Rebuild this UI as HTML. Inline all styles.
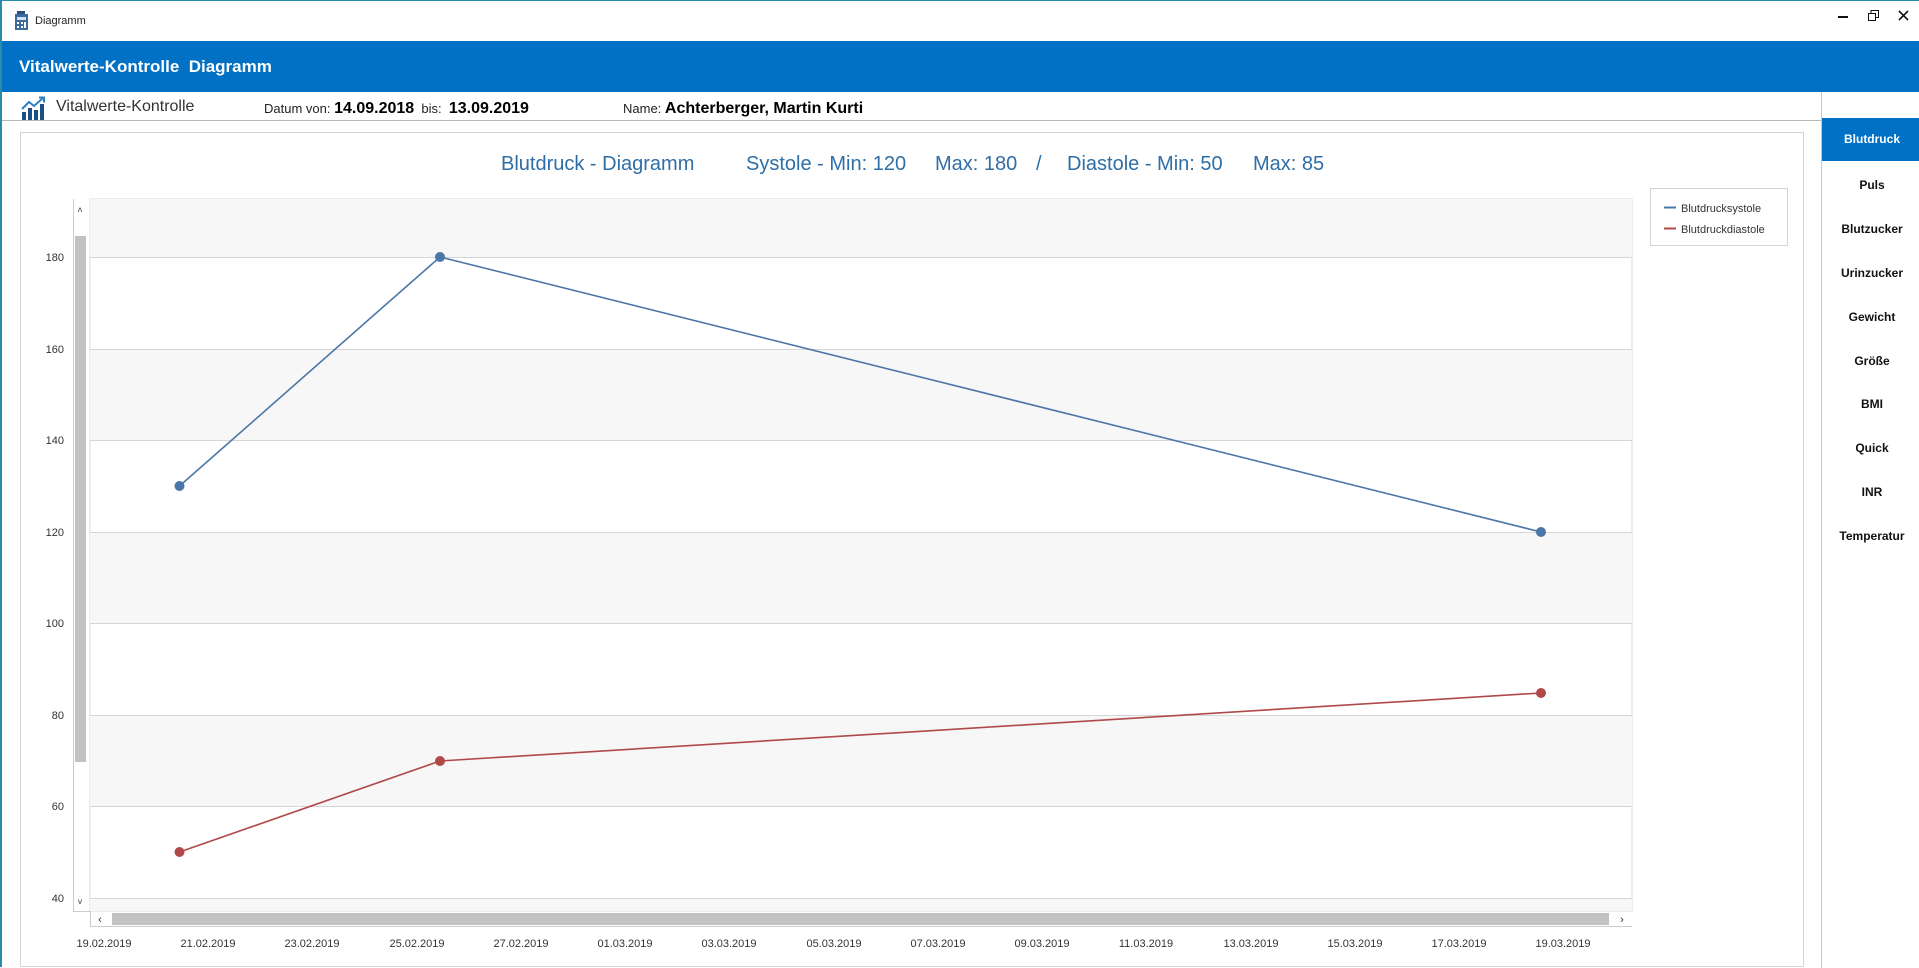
<!DOCTYPE html>
<html><head><meta charset="utf-8"><style>
*{margin:0;padding:0;box-sizing:border-box}
body{width:1919px;height:967px;overflow:hidden;background:#fff;font-family:"Liberation Sans",sans-serif;position:relative;border-left:2px solid #2a8aa8;border-top:1px solid #2a8aa8}
.a{position:absolute;white-space:nowrap}
.side{position:absolute;left:1819px;top:91px;width:100px;height:876px;border-left:1px solid #c8c8c8}
.si{position:absolute;left:0;width:100px;text-align:center;font-size:12px;font-weight:bold;color:#111}
</style></head><body>
<!-- title bar -->
<svg class="a" style="left:12px;top:10px" width="16" height="20" viewBox="0 0 16 20"><rect x="3" y="0" width="8" height="3" fill="#2c4f7c"/><rect x="1" y="3" width="13" height="16" fill="#3d6a9c"/><rect x="3" y="6" width="9" height="3" fill="#cfe2f5"/><rect x="3" y="11" width="2" height="2" fill="#fff"/><rect x="7" y="11" width="2" height="2" fill="#fff"/><rect x="3" y="15" width="2" height="2" fill="#fff"/><rect x="7" y="15" width="2" height="2" fill="#fff"/><rect x="10" y="11" width="2" height="6" fill="#fff"/></svg>
<div class="a" style="left:33px;top:14px;font-size:11px;color:#222">Diagramm</div>
<div class="a" style="left:1836px;top:15px;width:10px;height:2px;background:#111"></div>
<svg class="a" style="left:1866px;top:9px" width="12" height="11"><rect x="0.5" y="3.5" width="7" height="7" fill="none" stroke="#111"/><path d="M3 3.5V0.5H10.5V7.5H8" fill="none" stroke="#111"/></svg>
<svg class="a" style="left:1896px;top:9px" width="11" height="11"><path d="M1 1L10 10M10 1L1 10" stroke="#111" stroke-width="1.6"/></svg>
<!-- blue bar -->
<div class="a" style="left:0;top:40px;width:1919px;height:51px;background:#0071c5"></div>
<div class="a" style="left:17px;top:56px;font-size:17px;font-weight:bold;color:#fff">Vitalwerte-Kontrolle&nbsp; Diagramm</div>
<!-- header -->
<svg class="a" style="left:19px;top:95px" width="26" height="25" viewBox="0 0 26 25"><rect x="1" y="16" width="4" height="8" fill="#1c4f86"/><rect x="7" y="12" width="4" height="12" fill="#1c4f86"/><rect x="13" y="14" width="4" height="10" fill="#1c4f86"/><rect x="19" y="8" width="4" height="16" fill="#1c4f86"/><path d="M1 13L8 6L13 10L22 2" fill="none" stroke="#2f7fbf" stroke-width="2"/><path d="M18 1.5H23V6.5" fill="none" stroke="#2f7fbf" stroke-width="2"/></svg>
<div class="a" style="left:54px;top:97px;font-size:16px;color:#333">Vitalwerte-Kontrolle</div>
<div class="a" style="left:262px;top:99px;font-size:13px;color:#222">Datum von: <b style="font-size:16px;color:#000">14.09.2018</b>&nbsp; bis: &nbsp;<b style="font-size:16px;color:#000">13.09.2019</b></div>
<div class="a" style="left:621px;top:99px;font-size:13px;color:#222">Name: <b style="font-size:16px;color:#000">Achterberger, Martin Kurti</b></div>
<div class="a" style="left:0;top:119px;width:1819px;height:1px;background:#b8b8b8"></div>
<!-- sidebar -->
<div class="side">
<div class="a" style="left:0;top:26px;width:100px;height:43px;background:#0071c5"></div>
<div class="si" style="top:40px;color:#fff">Blutdruck</div>
<div class="si" style="top:86px">Puls</div>
<div class="si" style="top:130px">Blutzucker</div>
<div class="si" style="top:174px">Urinzucker</div>
<div class="si" style="top:218px">Gewicht</div>
<div class="si" style="top:262px">Größe</div>
<div class="si" style="top:305px">BMI</div>
<div class="si" style="top:349px">Quick</div>
<div class="si" style="top:393px">INR</div>
<div class="si" style="top:437px">Temperatur</div>
</div>
<!-- chart panel -->
<div class="a" style="left:18px;top:131px;width:1784px;height:835px;border:1px solid #d4d4d4"></div>
<div class="a" style="left:499px;top:152px;font-size:20px;color:#2f6ea6">Blutdruck - Diagramm</div>
<div class="a" style="left:744px;top:152px;font-size:20px;color:#2f6ea6">Systole - Min: 120</div>
<div class="a" style="left:933px;top:152px;font-size:20px;color:#2f6ea6">Max: 180</div>
<div class="a" style="left:1034px;top:152px;font-size:20px;color:#2f6ea6">/</div>
<div class="a" style="left:1065px;top:152px;font-size:20px;color:#2f6ea6">Diastole - Min: 50</div>
<div class="a" style="left:1251px;top:152px;font-size:20px;color:#2f6ea6">Max: 85</div>
<svg class="a" style="left:0;top:0" width="1919" height="967" font-family="Liberation Sans, sans-serif">
<rect x="88" y="198" width="1542" height="712" fill="#fff" stroke="#d8d8d8"/>
<rect x="88" y="198" width="1542" height="58" fill="#f7f7f7"/>
<rect x="88" y="348" width="1542" height="91" fill="#f7f7f7"/>
<rect x="88" y="531" width="1542" height="92" fill="#f7f7f7"/>
<rect x="88" y="714" width="1542" height="92" fill="#f7f7f7"/>
<rect x="88" y="897" width="1542" height="13" fill="#f7f7f7"/>
<g stroke="#d6d6d6"><line x1="88" x2="1630" y1="256.5" y2="256.5"/><line x1="88" x2="1630" y1="348.5" y2="348.5"/><line x1="88" x2="1630" y1="439.5" y2="439.5"/><line x1="88" x2="1630" y1="531.5" y2="531.5"/><line x1="88" x2="1630" y1="622.5" y2="622.5"/><line x1="88" x2="1630" y1="714.5" y2="714.5"/><line x1="88" x2="1630" y1="805.5" y2="805.5"/><line x1="88" x2="1630" y1="897.5" y2="897.5"/></g>
<line x1="71.5" x2="71.5" y1="198" y2="910" stroke="#ccc"/>
<line x1="71" x2="88" y1="910.5" y2="910.5" stroke="#ccc"/>
<g font-size="11" fill="#333" text-anchor="end"><text x="62" y="260">180</text><text x="62" y="352">160</text><text x="62" y="443">140</text><text x="62" y="535">120</text><text x="62" y="626">100</text><text x="62" y="718">80</text><text x="62" y="809">60</text><text x="62" y="901">40</text></g>
<rect x="73" y="235" width="11" height="526" fill="#c2c2c2"/>
<text x="78" y="212" font-size="9" text-anchor="middle" fill="#333">˄</text>
<text x="78" y="904" font-size="9" text-anchor="middle" fill="#333">˅</text>
<rect x="110" y="912" width="1497" height="12" fill="#c2c2c2"/>
<text x="98" y="922" font-size="11" text-anchor="middle" fill="#333">‹</text>
<text x="1620" y="922" font-size="11" text-anchor="middle" fill="#333">›</text>
<line x1="88" x2="1630" y1="925.5" y2="925.5" stroke="#ccc"/>
<line x1="88.5" x2="88.5" y1="910" y2="926" stroke="#ccc"/>
<g font-size="11" fill="#333" text-anchor="middle">
<text x="102" y="946">19.02.2019</text><text x="206" y="946">21.02.2019</text><text x="310" y="946">23.02.2019</text><text x="415" y="946">25.02.2019</text><text x="519" y="946">27.02.2019</text><text x="623" y="946">01.03.2019</text><text x="727" y="946">03.03.2019</text><text x="832" y="946">05.03.2019</text><text x="936" y="946">07.03.2019</text><text x="1040" y="946">09.03.2019</text><text x="1144" y="946">11.03.2019</text><text x="1249" y="946">13.03.2019</text><text x="1353" y="946">15.03.2019</text><text x="1457" y="946">17.03.2019</text><text x="1561" y="946">19.03.2019</text></g>
<polyline points="177.5,485 438,256 1539,531" fill="none" stroke="#4a77a8" stroke-width="1.6"/>
<polyline points="177.5,851 438,760 1539,692" fill="none" stroke="#b04a48" stroke-width="1.6"/>
<g fill="#4a77a8"><circle cx="177.5" cy="485" r="5"/><circle cx="438" cy="256" r="5"/><circle cx="1539" cy="531" r="5"/></g>
<g fill="#b04a48"><circle cx="177.5" cy="851" r="5"/><circle cx="438" cy="760" r="5"/><circle cx="1539" cy="692" r="5"/></g>
<rect x="1648.5" y="187.5" width="137" height="57" fill="#fff" stroke="#d4d4d4"/>
<line x1="1662" x2="1674" y1="206.5" y2="206.5" stroke="#4a77a8" stroke-width="2"/>
<line x1="1662" x2="1674" y1="227.5" y2="227.5" stroke="#b04a48" stroke-width="2"/>
<g font-size="11" fill="#333"><text x="1679" y="211">Blutdrucksystole</text><text x="1679" y="232">Blutdruckdiastole</text></g>
</svg>
</body></html>
